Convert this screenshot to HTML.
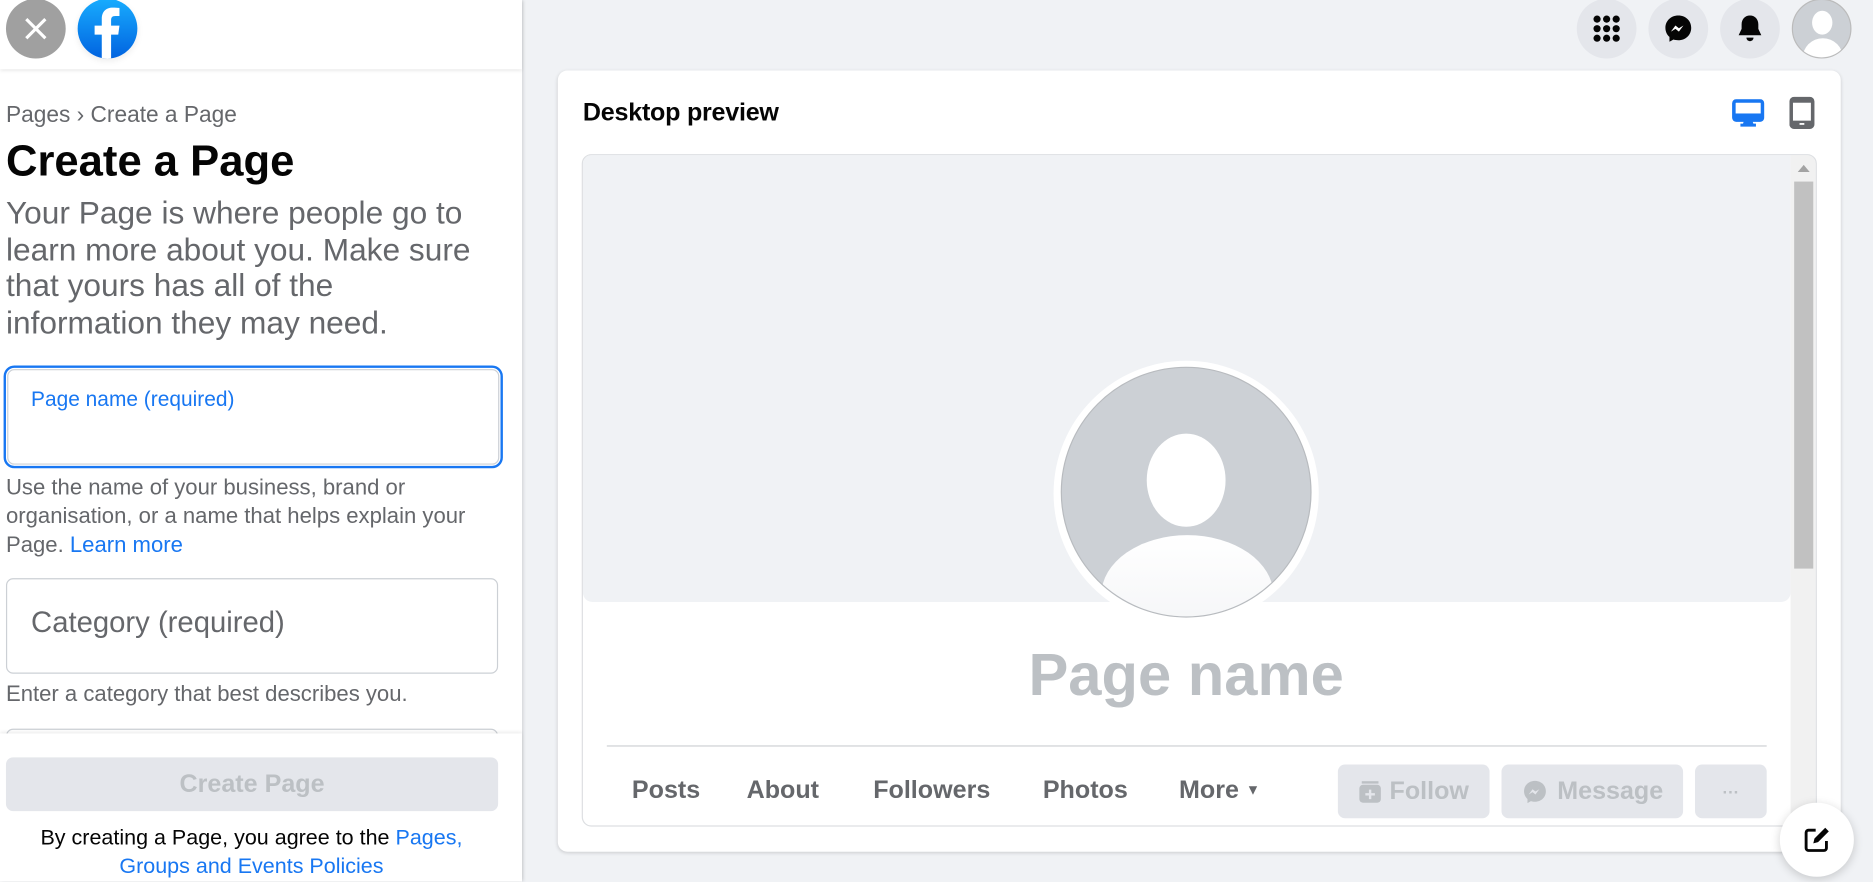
<!DOCTYPE html>
<html><head><meta charset="utf-8">
<style>
html,body{margin:0;padding:0;width:1873px;height:882px;overflow:hidden;background:#f0f2f5;font-family:"Liberation Sans",Arial,sans-serif;}
#w{position:absolute;left:0;top:0;width:1568px;height:738px;transform:scale(1.19452);transform-origin:0 0;background:#f0f2f5;}
.a{position:absolute;}
.t{position:absolute;white-space:nowrap;}
.left{left:0;top:0;width:437px;height:738px;background:#fff;box-shadow:1px 0 3px rgba(0,0,0,.15);}
.hdr{left:0;top:0;width:437px;height:58px;background:#fff;box-shadow:0 1px 3px rgba(0,0,0,.1);}
.g{color:#65676b;}
.circ{border-radius:50%;}
.btn{background:#e4e6eb;border-radius:6px;color:#bcc0c4;font-weight:bold;font-size:21px;display:flex;align-items:center;justify-content:center;}
.tab{font-size:21px;font-weight:bold;color:#65676b;top:650px;}
.ic{background:#e4e6eb;width:50px;height:50px;top:-1px;display:flex;align-items:center;justify-content:center;}
</style></head><body><div id="w">

<div class="a circ ic" style="left:1320px"><svg width="24" height="24" viewBox="0 0 24 24"><g fill="#050505"><circle cx="4" cy="4" r="3"/><circle cx="12" cy="4" r="3"/><circle cx="20" cy="4" r="3"/><circle cx="4" cy="12" r="3"/><circle cx="12" cy="12" r="3"/><circle cx="20" cy="12" r="3"/><circle cx="4" cy="20" r="3"/><circle cx="12" cy="20" r="3"/><circle cx="20" cy="20" r="3"/></g></svg></div>
<div class="a circ ic" style="left:1380px"><svg width="26" height="26" viewBox="0 0 26 26"><path d="M13 2C6.9 2 2.2 6.4 2.2 12.3c0 3.1 1.3 5.8 3.4 7.6V24l3.4-1.9c1.2.4 2.5.6 4 .6 6.1 0 10.8-4.4 10.8-10.4S19.1 2 13 2z" fill="#050505"/><path d="M6.8 15.5l3.8-5.2 2.9 2.3 3.8-2.3-3.8 5.2-2.9-2.3z" fill="#fff"/></svg></div>
<div class="a circ ic" style="left:1440px"><svg width="24" height="26" viewBox="0 0 24 26"><path d="M12 2c-4.2 0-7 3.2-7 7.4v3.8L2.5 18.5h19L19 13.2V9.4C19 5.2 16.2 2 12 2z" fill="#050505"/><path d="M9 20.5h6a3 3 0 0 1-6 0z" fill="#050505"/></svg></div>
<div class="a circ" style="left:1500px;top:-1px;width:50px;height:50px;background:#ccd0d5;border:1px solid #bbb;box-sizing:border-box;overflow:hidden"><div class="a circ" style="left:16px;top:9px;width:17px;height:20px;background:#fff;border-radius:50%"></div><div class="a" style="left:8px;top:32px;width:34px;height:24px;background:#fff;border-radius:17px 17px 0 0"></div></div>

<div class="a" style="left:467px;top:59px;width:1074px;height:654px;background:#fff;border-radius:8px;box-shadow:0 1px 3px rgba(0,0,0,.15)"></div>
<div class="t" style="left:488px;top:83px;font-size:21px;font-weight:bold;color:#050505;letter-spacing:-.2px">Desktop preview</div>
<svg class="a" style="left:1450px;top:83px" width="27" height="24" viewBox="0 0 27 24"><rect x="1.5" y="1.5" width="24" height="16" rx="2" fill="none" stroke="#1877f2" stroke-width="3"/><rect x="1.5" y="12" width="24" height="5.5" fill="#1877f2"/><path d="M10 18h7l1 3H9z" fill="#1877f2"/><rect x="7" y="20.5" width="13" height="2.5" fill="#1877f2"/></svg>
<svg class="a" style="left:1498px;top:81px" width="21" height="27" viewBox="0 0 21 27"><rect x="1.5" y="1.5" width="18" height="24" rx="2.5" fill="none" stroke="#65676b" stroke-width="3"/><rect x="1.5" y="1.5" width="18" height="3.5" fill="#65676b"/><rect x="1.5" y="20" width="18" height="5.5" fill="#65676b"/><rect x="8.5" y="22" width="4" height="1.5" fill="#fff"/></svg>

<div class="a" style="left:487px;top:129px;width:1032px;height:561px;border:1px solid #dddfe2;border-radius:8px;background:#fff;overflow:hidden">
  <div class="a" style="left:0;top:0;width:1011px;height:374px;background:#f0f2f5;border-radius:0 0 8px 8px"></div>
  <div class="a" style="left:1011px;top:0;width:21px;height:561px;background:#f1f1f1"></div>
  <div class="a" style="left:1014px;top:22px;width:16px;height:324px;background:#c1c1c1"></div>
  <div class="a" style="left:1017px;top:8px;width:0;height:0;border-left:5px solid transparent;border-right:5px solid transparent;border-bottom:6px solid #a3a3a3"></div>
</div>
<div class="a circ" style="left:882px;top:302px;width:222px;height:222px;background:#fff"></div>
<div class="a circ" style="left:888px;top:307px;width:210px;height:210px;background:#ccd0d5;border:1px solid #b8bbbf;box-sizing:border-box;overflow:hidden">
  <div class="a" style="left:71px;top:55px;width:66px;height:78px;background:#fff;border-radius:50%/50%"></div>
  <div class="a" style="left:33px;top:140px;width:144px;height:90px;background:linear-gradient(#fff,#f3f4f6);border-radius:72px 72px 0 0/50px 50px 0 0"></div>
</div>
<div class="t" style="left:0;width:1986px;text-align:center;top:536px;font-size:50px;font-weight:bold;color:#bcc0c4">Page name</div>
<div class="a" style="left:508px;top:624px;width:971px;height:1px;background:#ced0d4"></div>
<div class="t tab" style="left:529px">Posts</div>
<div class="t tab" style="left:625px">About</div>
<div class="t tab" style="left:731px">Followers</div>
<div class="t tab" style="left:873px">Photos</div>
<div class="t tab" style="left:987px">More <span style="font-size:12px;vertical-align:3px">▼</span></div>
<div class="a btn" style="left:1120px;top:640px;width:127px;height:45px"><svg width="20" height="20" viewBox="0 0 20 20" style="margin-right:6px"><rect x="1" y="4" width="18" height="15" rx="3" fill="#bcc0c4"/><rect x="3" y="1" width="14" height="2" fill="#bcc0c4"/><path d="M10 8v8M6 12h8" stroke="#e4e6eb" stroke-width="2"/></svg>Follow</div>
<div class="a btn" style="left:1257px;top:640px;width:152px;height:45px"><svg width="22" height="22" viewBox="0 0 26 26" style="margin-right:8px"><path d="M13 2C6.9 2 2.2 6.4 2.2 12.3c0 3.1 1.3 5.8 3.4 7.6V24l3.4-1.9c1.2.4 2.5.6 4 .6 6.1 0 10.8-4.4 10.8-10.4S19.1 2 13 2z" fill="#bcc0c4"/><path d="M6.8 15.5l3.8-5.2 2.9 2.3 3.8-2.3-3.8 5.2-2.9-2.3z" fill="#e4e6eb"/></svg>Message</div>
<div class="a btn" style="left:1419px;top:640px;width:60px;height:45px;font-size:14px">···</div>

<div class="a circ" style="left:1490px;top:672px;width:62px;height:62px;background:#fff;box-shadow:0 2px 8px rgba(0,0,0,.18);display:flex;align-items:center;justify-content:center"><svg width="24" height="24" viewBox="0 0 24 24"><path d="M11 4H5a2 2 0 0 0-2 2v13a2 2 0 0 0 2 2h13a2 2 0 0 0 2-2v-6" fill="none" stroke="#050505" stroke-width="2.4"/><path d="M9 15l1-4 9-9 3 3-9 9z" fill="#050505"/></svg></div>

<div class="a left"></div>
<div class="a hdr"></div>
<div class="a circ" style="left:5px;top:-1px;width:50px;height:50px;background:#a0a0a0;display:flex;align-items:center;justify-content:center"><svg width="20" height="20" viewBox="0 0 20 20"><path d="M2 2l16 16M18 2L2 18" stroke="#fff" stroke-width="2.6"/></svg></div>
<div class="a circ" style="left:65px;top:-1px;width:50px;height:50px;background:linear-gradient(#18acfe,#0163e0);overflow:hidden;box-shadow:0 2px 6px rgba(0,0,0,.08)"><svg width="50" height="50" viewBox="0 0 50 50"><path d="M28 50V30h6l1-7.5h-7v-4.5c0-2.2.7-3.6 3.7-3.6H35V7.7c-.7-.1-3-.3-5.6-.3-5.6 0-9.2 3.3-9.2 9.5v5.6h-6V30h6v20z" fill="#fff"/></svg></div>

<div class="t g" style="left:5px;top:86px;font-size:19px">Pages › Create a Page</div>
<div class="t" style="left:5px;top:114px;font-size:36.5px;font-weight:bold;color:#050505">Create a Page</div>
<div class="a g" style="left:5px;top:163px;width:430px;font-size:26.5px;line-height:30.5px;white-space:nowrap">Your Page is where people go to<br>learn more about you. Make sure<br>that yours has all of the<br>information they may need.</div>

<div class="a" style="left:3px;top:306px;width:418px;height:86px;border:2px solid #1877f2;border-radius:9px;box-sizing:border-box"></div>
<div class="a" style="left:6px;top:309px;width:412px;height:80px;border:1px solid #ccd0d5;border-radius:6px;box-sizing:border-box"></div>
<div class="t" style="left:26px;top:324px;font-size:17.5px;color:#1877f2">Page name (required)</div>
<div class="a g" style="left:5px;top:396px;width:430px;font-size:18.5px;line-height:24px;white-space:nowrap">Use the name of your business, brand or<br>organisation, or a name that helps explain your<br>Page. <span style="color:#1877f2">Learn more</span></div>

<div class="a" style="left:5px;top:484px;width:412px;height:80px;border:1px solid #ccd0d5;border-radius:6px;box-sizing:border-box"></div>
<div class="t g" style="left:26px;top:508px;font-size:24.5px">Category (required)</div>
<div class="t g" style="left:5px;top:570px;font-size:18.5px">Enter a category that best describes you.</div>
<div class="a" style="left:5px;top:610px;width:412px;height:20px;border:1px solid #ccd0d5;border-radius:6px;box-sizing:border-box"></div>

<div class="a" style="left:0;top:614px;width:437px;height:124px;background:#fff;box-shadow:0 -1px 3px rgba(0,0,0,.08)"></div>
<div class="a btn" style="left:5px;top:634px;width:412px;height:45px">Create Page</div>
<div class="a" style="left:0;top:689px;width:421px;text-align:center;font-size:18px;line-height:24px;color:#050505">By creating a Page, you agree to the <span style="color:#1877f2">Pages,<br>Groups and Events Policies</span></div>

</div></body></html>
